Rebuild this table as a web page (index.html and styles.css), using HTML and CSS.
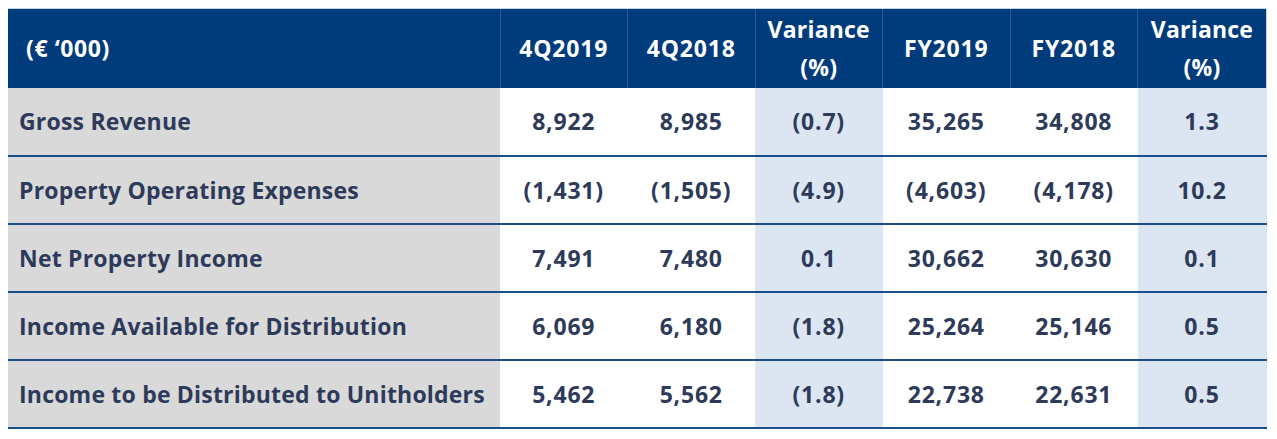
FILE: index.html
```html
<!DOCTYPE html>
<html lang="en">
<head>
<meta charset="utf-8">
<title>Financial Summary</title>
<link rel="stylesheet" href="styles.css">
</head>
<body>
<table class="fin">
  <colgroup>
    <col class="c-label">
    <col class="c-num">
    <col class="c-num">
    <col class="c-num">
    <col class="c-num">
    <col class="c-num">
    <col class="c-last">
  </colgroup>
  <thead>
    <tr>
      <th class="h-label">(€ ‘000)</th>
      <th class="h-num">4Q2019</th>
      <th class="h-num">4Q2018</th>
      <th>Variance<br>(%)</th>
      <th class="h-num">FY2019</th>
      <th class="h-num">FY2018</th>
      <th>Variance<br>(%)</th>
    </tr>
  </thead>
  <tbody>
    <tr>
      <td class="label">Gross Revenue</td>
      <td>8,922</td><td>8,985</td><td class="var">(0.7)</td>
      <td>35,265</td><td>34,808</td><td class="var">1.3</td>
    </tr>
    <tr>
      <td class="label">Property Operating Expenses</td>
      <td>(1,431)</td><td>(1,505)</td><td class="var">(4.9)</td>
      <td>(4,603)</td><td>(4,178)</td><td class="var">10.2</td>
    </tr>
    <tr>
      <td class="label">Net Property Income</td>
      <td>7,491</td><td>7,480</td><td class="var">0.1</td>
      <td>30,662</td><td>30,630</td><td class="var">0.1</td>
    </tr>
    <tr>
      <td class="label">Income Available for Distribution</td>
      <td>6,069</td><td>6,180</td><td class="var">(1.8)</td>
      <td>25,264</td><td>25,146</td><td class="var">0.5</td>
    </tr>
    <tr>
      <td class="label">Income to be Distributed to Unitholders</td>
      <td>5,462</td><td>5,562</td><td class="var">(1.8)</td>
      <td>22,738</td><td>22,631</td><td class="var">0.5</td>
    </tr>
  </tbody>
</table>
</body>
</html>
```

FILE: styles.css
```css
html, body {
  background: #ffffff;
}
body {
  margin: 8px;
  font-family: "Open Sans", "Liberation Sans", sans-serif;
}
.fin {
  width: 1259px;
  table-layout: fixed;
  border-collapse: collapse;
  border-spacing: 0;
  font-weight: 700;
  font-size: 23px;
  letter-spacing: 0.8px;
  color: #2d3a59;
}
.c-label { width: 492px; }
.c-num { width: 127.5px; }
.c-last { width: 129px; }

.fin thead tr {
  height: 79px;
  background: #003b7b;
}
.fin th {
  color: #ffffff;
  font-weight: 700;
  text-align: center;
  line-height: 38px;
  letter-spacing: 0.2px;
  padding: 0;
  border-left: 1px solid #2a5a92;
  border-top: 1px solid #c9d3df;
}
.fin th.h-num {
  letter-spacing: 0.8px;
}
.fin th:last-child {
  border-right: 1px solid #c9d3df;
}
.fin th.h-label {
  text-align: left;
  padding-left: 18px;
  letter-spacing: 0.6px;
  border-left: none;
}
.fin tbody tr {
  height: 68px;
}
.fin td {
  text-align: center;
  padding: 0;
  border-bottom: 2px solid #1c4d8c;
}
.fin td.label {
  text-align: left;
  padding-left: 11px;
  letter-spacing: 0.2px;
  background: #d9d9d9;
}
.fin td.var {
  background: #dce6f2;
}
```
